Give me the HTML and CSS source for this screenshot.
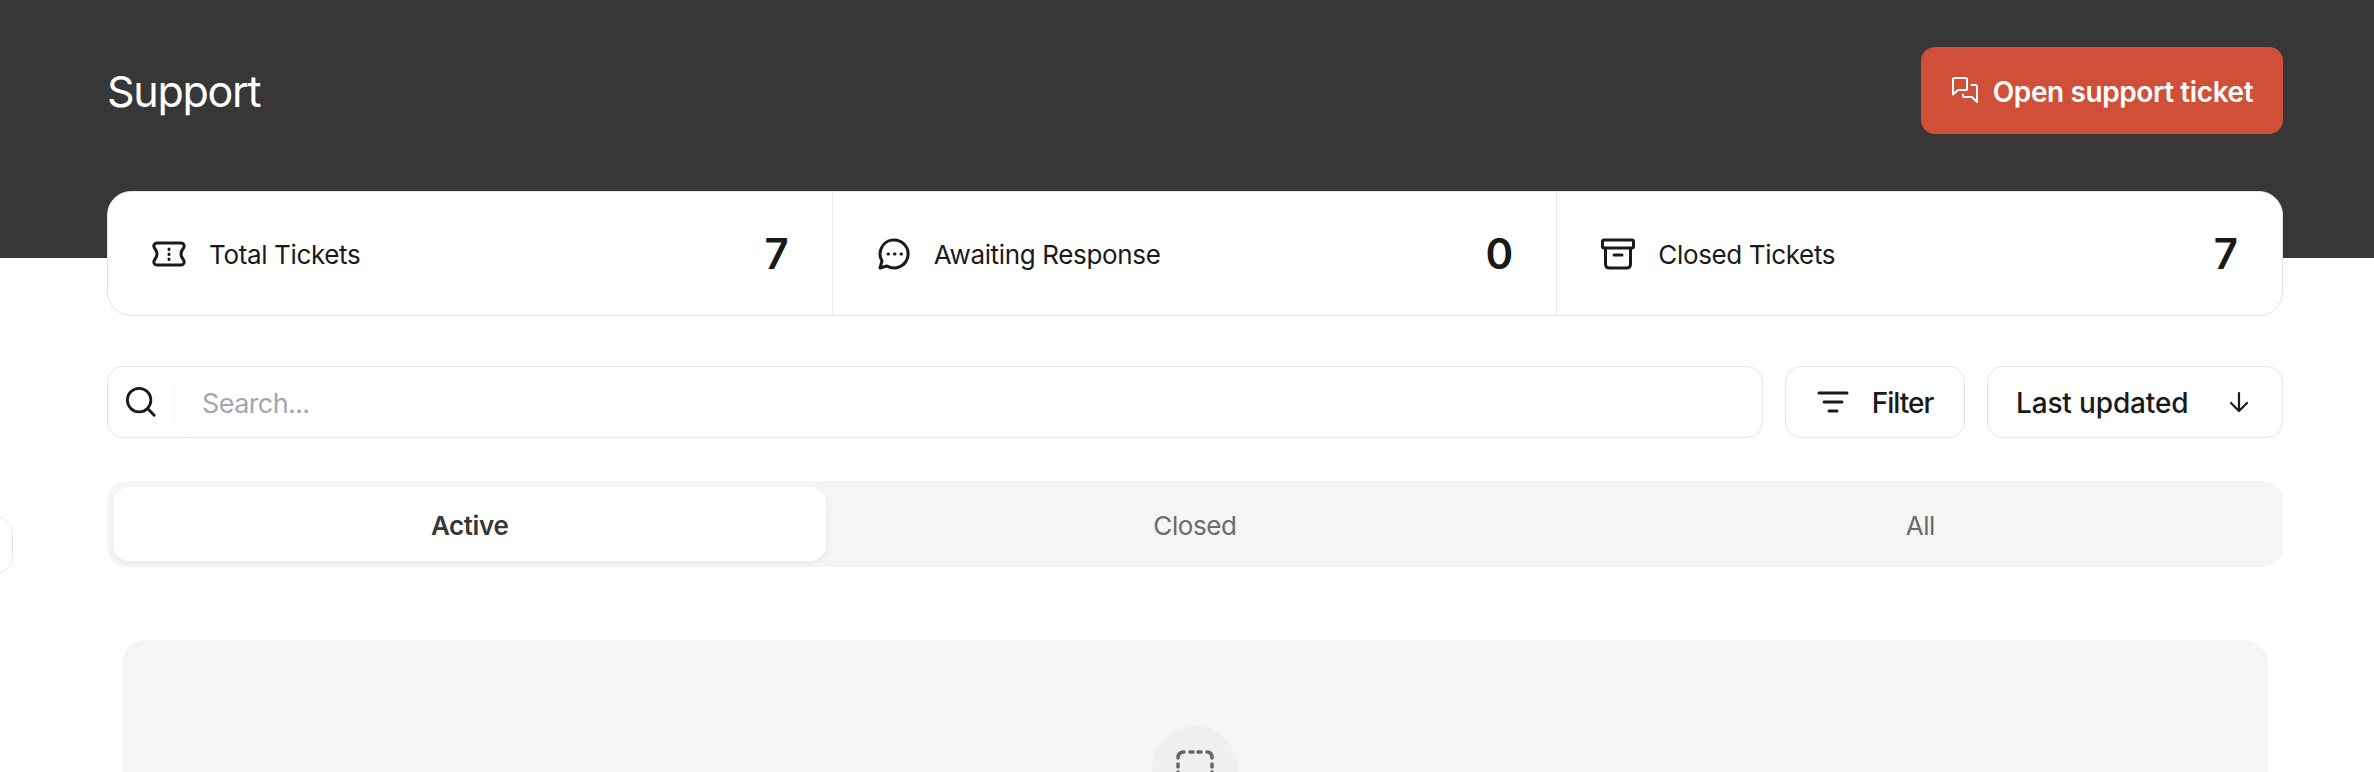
FILE: index.html
```html
<!DOCTYPE html>
<html lang="en">
<head>
  <meta charset="UTF-8" />
  <title>Support</title>
  <link rel="stylesheet" href="styles.css">
</head>
<body>

  <div class="side-tab"></div>

  <header class="top">
    <h1>Support</h1>
    <button class="open-btn">
      <svg width="30" height="30" viewBox="0 0 30 30" fill="none" stroke="#fff" stroke-width="2" stroke-linecap="round" stroke-linejoin="round">
        <path d="M2 3.500q0-1.500 1.500-1.500h11q1.500 0 1.500 1.500v9q0 1.500-1.500 1.500h-7.500l-5 4.500z"/>
        <path d="M12 18.500v1q0 1.500 1.500 1.500h7.500l5 5v-15.500q0-1.500-1.500-1.500h-4"/>
      </svg>
      <span>Open support ticket</span>
    </button>
  </header>

  <main class="content">
    <section class="stats">
      <div class="stat">
        <svg class="stat-icon" width="36" height="28" viewBox="0 0 36 28" fill="none" stroke="#1a1a1a" stroke-width="3" stroke-linecap="round" stroke-linejoin="round">
          <path d="M6 3h24c2.500 0 3.500 2 3 4c-.5 2-3 3-3 7s2.500 5 3 7c.5 2-.5 4-3 4h-24c-2.500 0-3.500-2-3-4c.5-2 3-3 3-7s-2.500-5-3-7c-.5-2 .5-4 3-4z"/>
          <path d="M18 9v.5M18 14v.5M18 19v.5"/>
        </svg>
        <span class="stat-label">Total Tickets</span>
        <span class="stat-num">7</span>
      </div>
      <div class="stat">
        <svg class="stat-icon" width="36" height="36" viewBox="0 0 36 36" fill="none" stroke="#1a1a1a" stroke-width="3" stroke-linecap="round" stroke-linejoin="round">
          <path d="M4 32l2-7a14 14 0 1 1 5 5z"/>
          <path d="M12 18h.5M18.500 18h.5M25 18h.5"/>
        </svg>
        <span class="stat-label">Awaiting Response</span>
        <span class="stat-num">0</span>
      </div>
      <div class="stat">
        <svg class="stat-icon" width="36" height="32" viewBox="0 0 36 32" fill="none" stroke="#1a1a1a" stroke-width="3" stroke-linecap="round" stroke-linejoin="round">
          <rect x="2.500" y="2" width="31" height="8" rx="1.500"/>
          <path d="M5.500 10v16q0 4 4 4h17q4 0 4-4v-16"/>
          <path d="M14 17h8"/>
        </svg>
        <span class="stat-label">Closed Tickets</span>
        <span class="stat-num">7</span>
      </div>
    </section>

    <section class="tools">
      <div class="search">
        <span class="search-icon">
          <svg width="32" height="32" viewBox="0 0 34 34" fill="none" stroke="#1a1a1a" stroke-width="3" stroke-linecap="round">
            <circle cx="15" cy="15" r="12.500"/>
            <path d="M24 24l7 7"/>
          </svg>
        </span>
        <div class="search-field">Search...</div>
      </div>
      <button class="tool-btn filter-btn">
        <svg width="32" height="24" viewBox="0 0 32 24" fill="none" stroke="#1a1a1a" stroke-width="3" stroke-linecap="round">
          <path d="M2 3h28M7 12h18M12 21h8"/>
        </svg>
        <span class="filter-text">Filter</span>
      </button>
      <button class="tool-btn sort-btn">
        <span>Last updated</span>
        <svg width="22" height="22" viewBox="0 0 22 22" fill="none" stroke="#1a1a1a" stroke-width="2.200" stroke-linecap="round" stroke-linejoin="round">
          <path d="M11 2v18M3 12l8 8 8-8"/>
        </svg>
      </button>
    </section>

    <nav class="tabs">
      <div class="tab active">Active</div>
      <div class="tab">Closed</div>
      <div class="tab">All</div>
    </nav>

    <section class="empty">
      <div class="empty-circle">
        <svg width="38" height="38" viewBox="0 0 38 38" fill="none" stroke="#666" stroke-width="3.500" stroke-linecap="round">
          <path d="M2 8q0-6 6-6M14 2h3M22 2h3M31 2q5 0 5 6M36 14v3M2 14v3M2 22v3M36 22v3M2 31v2M36 31v2"/>
        </svg>
      </div>
    </section>
  </main>

</body>
</html>
```

FILE: styles.css
```css
html, body {
  margin: 0; padding: 0;
  height: 772px; overflow: hidden;
  background: white; color: #1a1a1a;
  font-family: "Inter", sans-serif;
}
button { font-family: inherit; cursor: pointer; }

.side-tab {
  position: absolute; left: -41px; top: 516px;
  width: 52px; height: 56px;
  background: white;
  border: 1px solid #e6e6e6; border-radius: 18px;
}

.top {
  height: 258px; box-sizing: border-box;
  padding: 47px 91px 0 107px;
  background: #373737;
  display: flex; justify-content: space-between; align-items: flex-start;
}
h1 {
  margin: 0; height: 87px; line-height: 89px;
  font-size: 43px; font-weight: 400; letter-spacing: -1.3px;
  color: white;
}
.open-btn {
  width: 362px; height: 87px;
  display: flex; align-items: center; justify-content: center; gap: 12px;
  background: #d04f38; color: white;
  border: none; border-radius: 14px;
  font-size: 28px; font-weight: 600; letter-spacing: -0.4px;
}
.open-btn span { padding-top: 2px; }

.content { padding: 0 91px 0 107px; margin-top: -67px; }

.stats {
  height: 125px; box-sizing: border-box;
  display: grid; grid-template-columns: repeat(3, 1fr);
  background: white;
  border: 1px solid #e4e4e4; border-radius: 24px;
}
.stat {
  display: flex; align-items: center;
  padding: 0 43px;
  border-right: 1px solid #e8e8e8;
}
.stat:last-child { border-right: none; padding-right: 44px; }
.stat-icon { flex: none; margin-right: 22px; }
.stat-label { font-size: 26px; letter-spacing: -0.35px; flex: 1; padding-top: 1px; }
.stat-num { font-size: 42px; font-weight: 600; }

.tools {
  margin-top: 50px;
  display: flex; gap: 22px; height: 72px;
}
.search {
  flex: 1;
  display: flex;
  border: 1px solid #e6e6e6; border-radius: 16px;
  overflow: hidden;
}
.search-icon {
  width: 66px; flex: none;
  display: flex; align-items: center; justify-content: center;
  box-sizing: border-box;
}
.search-field {
  flex: 1;
  display: flex; align-items: center;
  padding: 2px 0 0 27px;
  border-left: 1px solid #f8f8f8; border-radius: 20px;
  font-size: 27px; letter-spacing: -0.6px; color: #a3a7b2;
}
.tool-btn {
  height: 72px; box-sizing: border-box;
  display: flex; align-items: center;
  background: white; color: #1a1a1a;
  border: 1px solid #e6e6e6; border-radius: 16px;
  font-size: 28px; font-weight: 500; letter-spacing: -0.15px;
}
.tool-btn span { padding-top: 2px; }
.filter-btn { width: 180px; justify-content: center; gap: 23px; }
.filter-text { letter-spacing: -1px; }
.sort-btn { width: 296px; justify-content: space-between; padding: 0 32px 0 28px; }

.tabs {
  margin-top: 43px;
  height: 86px;
  display: grid; grid-template-columns: repeat(3, 1fr);
  background: #f5f5f5; border-radius: 20px;
}
.tab {
  margin: 6px;
  padding-top: 2px;
  display: flex; align-items: center; justify-content: center;
  font-size: 26px; letter-spacing: -0.4px; color: #6b6b6b;
  border-radius: 16px;
}
.tab.active {
  background: white; color: #373737; font-weight: 600;
  box-shadow: 0 2px 6px rgba(0,0,0,0.06);
}

.empty {
  margin: 73px 15px 0;
  height: 132px; padding-top: 86px; box-sizing: border-box;
  background: #f5f5f5; border-radius: 24px 24px 0 0;
  display: flex; justify-content: center;
  overflow: hidden;
}
.empty-circle {
  width: 86px; height: 86px; flex: none;
  display: flex; align-items: center; justify-content: center;
  background: #efefef; border-radius: 50%;
}
```
